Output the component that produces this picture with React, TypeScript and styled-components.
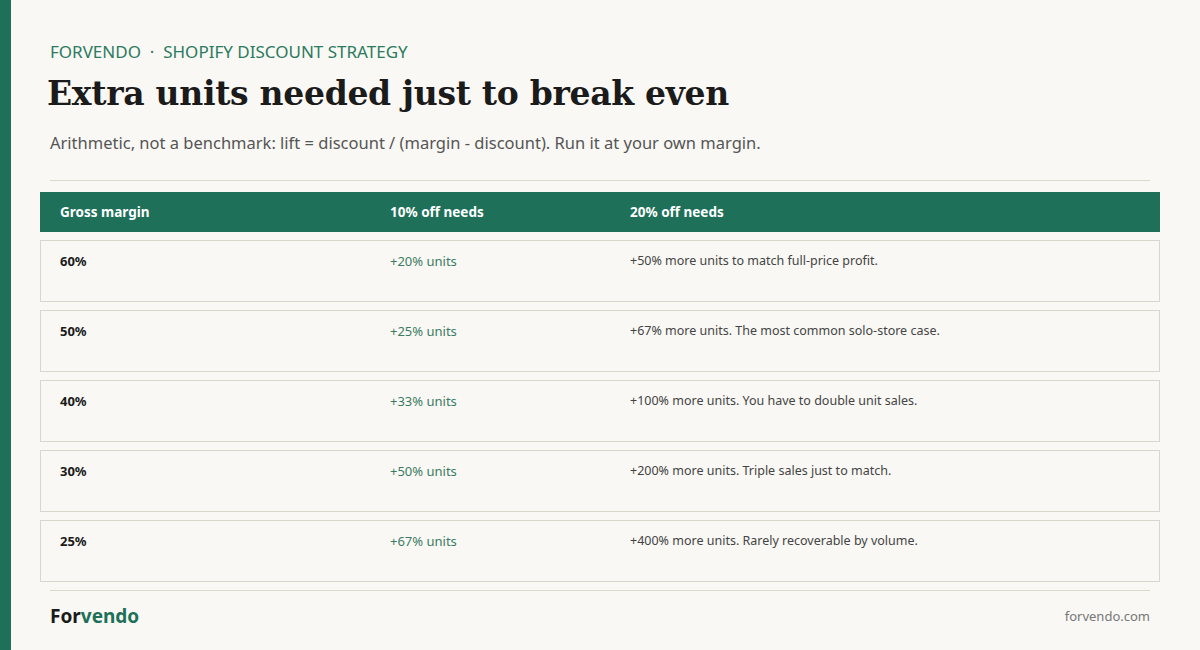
import React from "react";
import styled, { createGlobalStyle } from "styled-components";

const Global = createGlobalStyle`
  html, body { margin: 0; padding: 0; }
  body {
    background: #f9f8f4;
    font-family: "Noto Sans", "Open Sans", sans-serif;
    width: 1200px;
    height: 650px;
    overflow: hidden;
  }
`;

const Page = styled.div`
  display: flex;
  width: 1200px;
  height: 650px;
  background: #f9f8f4;
`;

const Stripe = styled.div`
  width: 11px;
  flex: none;
  background: #1e7059;
`;

const Main = styled.div`
  flex: 1;
  display: flex;
  flex-direction: column;
  padding: 0 40px 0 29px;
`;

const Header = styled.header`
  padding: 40px 10px 0 10px;
  display: flex;
  flex-direction: column;
`;

const Eyebrow = styled.div`
  font-size: 17px;
  line-height: 24px;
  color: #2c7a5f;
`;

const Title = styled.h1`
  margin: 8px 0 0 -3px;
  font-family: "DejaVu Serif", "Liberation Serif", serif;
  font-weight: 700;
  font-size: 33px;
  line-height: 44px;
  color: #1b1b1b;
  letter-spacing: -0.3px;
`;

const Subtitle = styled.p`
  margin: 16px 0 0 0;
  font-size: 16.5px;
  line-height: 22px;
  color: #555;
`;

const Divider = styled.div`
  height: 1px;
  background: #dcd8cd;
  margin: 0 10px;
`;

const TopDivider = styled(Divider)`
  margin-top: 26px;
`;

const Table = styled.div`
  display: flex;
  flex-direction: column;
  gap: 8px;
  margin-top: 11px;
`;

const Grid = styled.div`
  display: grid;
  grid-template-columns: 330px 240px 1fr;
  padding: 0 19px;
`;

const HeadRow = styled(Grid)`
  background: #1e7059;
  height: 40px;
  align-items: center;
  padding: 0 20px;
`;

const HeadCell = styled.div`
  color: #fff;
  font-weight: 700;
  font-size: 13.5px;
`;

const Row = styled(Grid)`
  border: 1px solid #d9d6cc;
  padding-top: 10px;
  box-sizing: content-box;
  height: 50px;
`;

const Margin = styled.div`
  font-weight: 700;
  font-size: 13px;
  line-height: 20px;
  color: #1b1b1b;
`;

const Need = styled.div`
  font-size: 13px;
  line-height: 20px;
  color: #3a7c63;
`;

const Note = styled.div`
  font-size: 12.5px;
  line-height: 20px;
  color: #444;
`;

const Footer = styled.footer`
  display: flex;
  justify-content: space-between;
  align-items: center;
  padding: 12px 10px 0 10px;
`;

const FooterDivider = styled(Divider)`
  margin-top: 8px;
`;

const Brand = styled.div`
  font-weight: 700;
  font-size: 19px;
  color: #1b1b1b;
  span { color: #1e7059; }
`;

const Site = styled.div`
  font-size: 13px;
  color: #777;
`;

const rows = [
  ["60%", "+20% units", "+50% more units to match full-price profit."],
  ["50%", "+25% units", "+67% more units. The most common solo-store case."],
  ["40%", "+33% units", "+100% more units. You have to double unit sales."],
  ["30%", "+50% units", "+200% more units. Triple sales just to match."],
  ["25%", "+67% units", "+400% more units. Rarely recoverable by volume."],
];

export default function App() {
  return (
    <>
      <Global />
      <Page>
        <Stripe />
        <Main>
          <Header>
            <Eyebrow>FORVENDO &nbsp;·&nbsp; SHOPIFY DISCOUNT STRATEGY</Eyebrow>
            <Title>Extra units needed just to break even</Title>
            <Subtitle>
              Arithmetic, not a benchmark: lift = discount / (margin - discount). Run it at your own margin.
            </Subtitle>
          </Header>
          <TopDivider />
          <Table>
            <HeadRow>
              <HeadCell>Gross margin</HeadCell>
              <HeadCell>10% off needs</HeadCell>
              <HeadCell>20% off needs</HeadCell>
            </HeadRow>
            {rows.map(([m, n, t]) => (
              <Row key={m}>
                <Margin>{m}</Margin>
                <Need>{n}</Need>
                <Note>{t}</Note>
              </Row>
            ))}
          </Table>
          <FooterDivider />
          <Footer>
            <Brand>
              For<span>vendo</span>
            </Brand>
            <Site>forvendo.com</Site>
          </Footer>
        </Main>
      </Page>
    </>
  );
}
